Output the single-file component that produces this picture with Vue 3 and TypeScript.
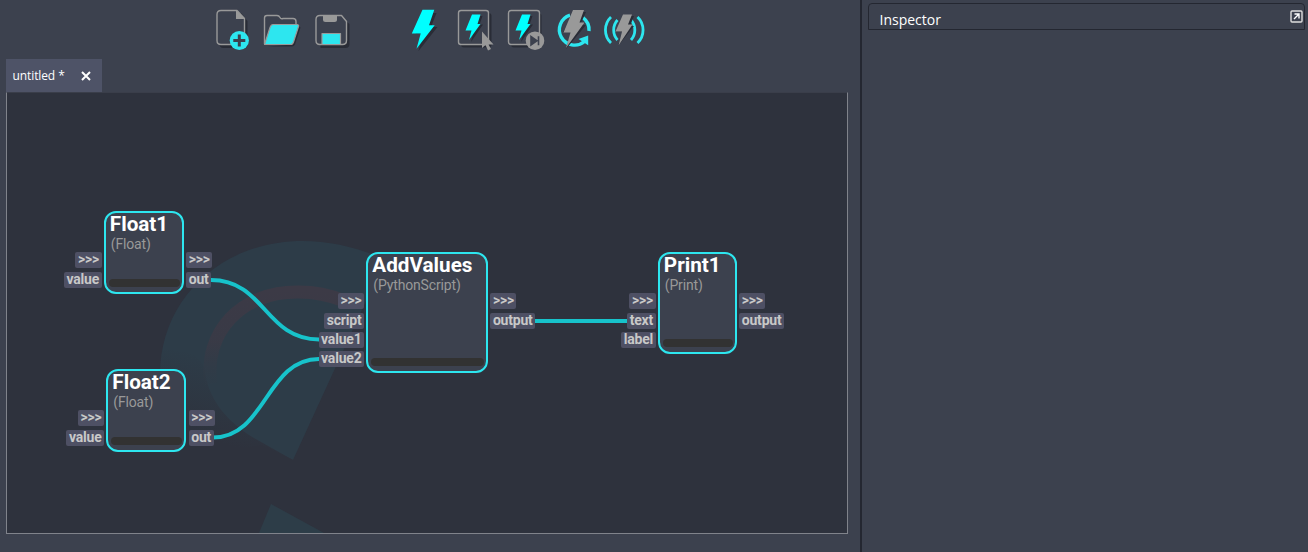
<script setup lang="ts">
interface GraphNode {
  name: string
  type: string
  x: number
  y: number
  w: number
  h: number
  inputs: string[]
  outputs: string[]
}

const origin = { x: 6, y: 92 }

const nodes: GraphNode[] = [
  { name: 'Float1', type: '(Float)', x: 103.5, y: 210.5, w: 80.4, h: 83.5, inputs: ['>>>', 'value'], outputs: ['>>>', 'out'] },
  { name: 'Float2', type: '(Float)', x: 106, y: 368.5, w: 80.4, h: 83, inputs: ['>>>', 'value'], outputs: ['>>>', 'out'] },
  { name: 'AddValues', type: '(PythonScript)', x: 366, y: 251.5, w: 122, h: 121.5, inputs: ['>>>', 'script', 'value1', 'value2'], outputs: ['>>>', 'output'] },
  { name: 'Print1', type: '(Print)', x: 657.5, y: 251.5, w: 79.4, h: 102.5, inputs: ['>>>', 'text', 'label'], outputs: ['>>>', 'output'] },
]

const wires = [
  'M211 280C265 280 265 339.500 319 339.500',
  'M213 437.500C266 437.500 266 359 319 359',
  'M534 321H629',
]

function place(n: GraphNode) {
  return {
    left: `${n.x - origin.x}px`,
    top: `${n.y - origin.y}px`,
    width: `${n.w}px`,
    height: `${n.h}px`,
  }
}
</script>

<template>
  <div class="app">
    <main class="workspace">
      <svg class="toolbar" width="860" height="59" viewBox="0 0 860 59">
        <!-- new -->
        <g stroke-linejoin="round">
          <path d="M223 13h18l6.500 8v24q0 3-3 3h-21q-4 0-4-4V17q0-4 4-4z" class="shade" />
          <path d="M221 10.500h16l7.500 8v23q0 3-3 3H221q-4 0-4-4v-26q0-4 4-4z" class="outline" />
          <path d="M236 10l9 9h-9z" class="grey" />
          <circle cx="239.300" cy="40.500" r="9.600" class="cyan" />
          <path d="M239.300 34.500v12M233.300 40.500h12" class="cut" />
        </g>
        <!-- open -->
        <g stroke-linejoin="round">
          <path d="M268 46.500h24q2 0 3-2l5.500-17-4-3-4 20z" class="shade" />
          <path d="M264.500 44V18q0-2.500 2.500-2.500h10q2 0 3 2t3 1h10q3 0 3 3v3" class="outline" />
          <path d="M273 24.500h24q2 0 1.500 2l-5 15.500q-.8 2.500-3 2.500h-26l5.500-17q1-3 3-3z" class="folder" />
        </g>
        <!-- save -->
        <g stroke-linejoin="round">
          <path d="M320 18h22l7.500 6v20q0 4-4 4h-25z" class="shade" />
          <path d="M320 15.500h21.500l5 6v19q0 4-4 4H320q-4 0-4-4v-21q0-4 4-4z" class="outline" />
          <path d="M323 15.500h14v4q0 2.500-2.500 2.500h-9q-2.500 0-2.500-2.500z" class="grey" />
          <path d="M322 33.500h18.500v11H322z" class="folder" />
        </g>
        <!-- run -->
        <path d="M425.500 13h11l-5.500 14h6.500l-19 24 4.500-17h-7.500z" class="shade" />
        <path d="M422.500 9.800H434.300L429 25.300h5.700L416.500 48.700l4.200-15.200H411.800z" class="bolt" />
        <!-- run selected -->
        <rect x="461" y="13" width="30.500" height="34.500" rx="3" class="shade" />
        <rect x="458.500" y="10.500" width="30" height="34" rx="2.500" class="outline" />
        <path d="M475 16h7.500l-3 8.500h3.500L471 42l3-12.500h-5.500z" class="shade" />
        <path d="M472 14.500h8.500l-3 9.500h3L469 40l2.500-9.500H465.500z" class="bolt" />
        <path d="M482 31.500V48l3.500-3 2.500 5.500 3-1.500-2.500-4.500h5z" class="grey" />
        <!-- run next -->
        <rect x="511" y="13" width="30.500" height="34.500" rx="3" class="shade" />
        <rect x="508.500" y="10.500" width="31" height="34" rx="2.500" class="outline" />
        <path d="M525 16h7.500l-3 8.500h3.500L521 42l3-12.500h-5.500z" class="shade" />
        <path d="M522 14.500h8.500l-3 9.500h3L519 40l2.500-9.500H515.500z" class="bolt" />
        <circle cx="535" cy="40.700" r="9.300" class="grey" />
        <path d="M531 36.500v8.500l6-4.200zM538.500 36.300v9" class="step" />
        <!-- loop -->
        <path d="M583 17.600A15.300 15.300 0 0 1 589 31M570 15.200A15.300 15.300 0 1 0 584.500 41.500" class="ring" />
        <path d="M588.200 35.500v9.800l-9.700-6.300z" class="cyan" />
        <path d="M575 12h11l-6 13h6l-20 24 5-17h-8z" class="shade" />
        <path d="M573 10h11l-4.500 12.500h5L566 48l4.500-15.500H563.500z" class="grey" />
        <!-- live -->
        <path d="M611 17a18 18 0 0 0 0 26M617.500 20a15 15 0 0 0 0 20M637.500 17a18 18 0 0 1 0 26M631 20a15 15 0 0 1 0 20" class="wave" />
        <path d="M625 16h9l-4 10h4l-16 20 4-14h-6z" class="shade" />
        <path d="M623 14.500h9l-4 10h4.500L618.500 45.500l3.500-14h-6.500z" class="grey" />
      </svg>

      <div class="tab">
        <span>untitled *</span>
        <svg class="close" width="10" height="10" viewBox="0 0 10 10"><path d="M1 1l8 8M9 1L1 9" /></svg>
      </div>

      <section class="canvas">
        <svg class="scene" width="842" height="442" viewBox="6 92 842 442">
          <defs>
            <linearGradient id="fade" gradientUnits="userSpaceOnUse" x1="225" y1="360" x2="205" y2="440">
              <stop offset="0" stop-color="#2e323d" stop-opacity="0" />
              <stop offset="1" stop-color="#2e323d" />
            </linearGradient>
            <linearGradient id="mauve" gradientUnits="userSpaceOnUse" x1="0" y1="290" x2="0" y2="395">
              <stop offset="0" stop-color="#3c3a46" />
              <stop offset=".5" stop-color="#3a3a46" stop-opacity=".9" />
              <stop offset="1" stop-color="#2e3a46" stop-opacity="0" />
            </linearGradient>
          </defs>
          <path d="M160 375C160 299 221 241 303 241C329 241 355 247 382 258V266L293 460L262 445C206 455 160 424 160 375Z" fill="#2d3c48" />
          <path d="M158 350C180 350 199 350 205 370C207 396 225 421 254 438L293 460L285 475C230 462 158 440 158 350Z" fill="url(#fade)" />
          <path d="M211 384C203 333 241 291 299 292C315 292 332 296 345 301" fill="none" stroke="url(#mauve)" stroke-width="13" />
          <path d="M271 504L324 533H259Z" fill="#2d3d48" />
          <path v-for="d in wires" :key="d" :d="d" class="wire" />
        </svg>

        <article v-for="n in nodes" :key="n.name" class="node" :style="place(n)">
          <h2>{{ n.name }}</h2>
          <p>{{ n.type }}</p>
          <div class="progress"></div>
          <ul class="ports inputs">
            <li v-for="p in n.inputs" :key="p"><span>{{ p }}</span></li>
          </ul>
          <ul class="ports outputs">
            <li v-for="p in n.outputs" :key="p"><span>{{ p }}</span></li>
          </ul>
        </article>
      </section>
    </main>

    <aside class="side">
      <header class="inspector">
        <span>Inspector</span>
        <svg width="13" height="13" viewBox="0 0 13 13">
          <rect x="1" y="1" width="11" height="11" rx="1" />
          <path d="M4 9l4.500-4.500M4.500 4H9v4.500" />
        </svg>
      </header>
    </aside>
  </div>
</template>

<style>
body { margin: 0; background: #3c414e; }
</style>

<style scoped>
.app {
  display: flex;
  width: 1308px;
  height: 552px;
  overflow: hidden;
  background: #3c414e;
  color: #fff;
  font-family: "Open Sans", "Noto Sans", sans-serif;
}
.workspace {
  display: flex;
  flex-direction: column;
  width: 860px;
  flex: none;
}
.toolbar { display: block; flex: none; }
.shade { fill: #292c36; }
.outline { fill: #3c414e; stroke: #999; stroke-width: 1.4; }
.grey { fill: #999; }
.cyan { fill: #2de6ef; }
.bolt { fill: #00ffff; }
.cut { stroke: #3c414e; stroke-width: 3; fill: none; }
.folder { fill: #2de6ef; stroke: #999; stroke-width: 1.2; }
.step { fill: #3c414e; stroke: #3c414e; stroke-width: 1.6; }
.ring { fill: none; stroke: #2de6ef; stroke-width: 3.4; }
.wave { fill: none; stroke: #2de6ef; stroke-width: 2.8; }
.tab {
  display: flex;
  align-items: center;
  flex: none;
  box-sizing: border-box;
  width: 96px;
  height: 33px;
  margin-left: 6px;
  padding: 0 11px 0 6.500px;
  justify-content: space-between;
  background: #4e5367;
  font-size: 12px;
  letter-spacing: -0.1px;
}
.close path { stroke: #fff; stroke-width: 2; fill: none; }
.canvas {
  position: relative;
  box-sizing: border-box;
  width: 842px;
  height: 442px;
  flex: none;
  margin-left: 6px;
  background: #2e323d;
}
.canvas::after {
  content: "";
  position: absolute;
  inset: 0;
  border: 1px solid #80838b;
  border-top-color: #3a3e4a;
}
.scene { position: absolute; left: 0; top: 0; }
.wire { fill: none; stroke: #17c3cb; stroke-width: 4; }
.node {
  position: absolute;
  box-sizing: border-box;
  border: 2px solid #2de6ef;
  border-radius: 12px;
  background: #3c414e;
  font-family: Roboto, sans-serif;
}
.node h2 {
  margin: 0 0 0 4.300px;
  font-size: 20.700px;
  line-height: 23px;
  font-weight: 700;
}
.node p {
  margin: 0.500px 0 0 5.300px;
  font-size: 14px;
  letter-spacing: -0.150px;
  line-height: 16px;
  color: #999;
  white-space: nowrap;
}
.progress {
  position: absolute;
  left: 3px;
  right: 2px;
  bottom: 5px;
  height: 8px;
  border-radius: 4px;
  background: #323232;
}
.ports {
  position: absolute;
  top: 39.800px;
  margin: 0;
  padding: 0;
  list-style: none;
  display: flex;
  flex-direction: column;
  gap: 3.400px;
}
.inputs { right: calc(100% + 4px); align-items: flex-end; }
.outputs { left: calc(100% + 4.400px); align-items: flex-start; }
.ports li {
  height: 16px;
  padding: 0 2.500px;
  border-radius: 2px;
  background: #4e5064;
  color: #c8c8c8;
  font-size: 14px;
  letter-spacing: -0.200px;
  line-height: 15px;
  font-weight: 700;
  white-space: nowrap;
}
.side {
  flex: 1;
  box-sizing: border-box;
  border-left: 2px solid #242731;
  padding: 3px 3px 0 6px;
}
.inspector {
  display: flex;
  align-items: center;
  justify-content: space-between;
  box-sizing: border-box;
  height: 27px;
  padding: 5px 1px 0 10.500px;
  border: 1px solid #242731;
  border-radius: 4px 4px 0 0;
  font-size: 14px;
}
.inspector svg { margin-top: -5px; }
.inspector rect { fill: none; stroke: #ddd; stroke-width: 1.4; }
.inspector path { fill: none; stroke: #fff; stroke-width: 1.4; }
</style>
